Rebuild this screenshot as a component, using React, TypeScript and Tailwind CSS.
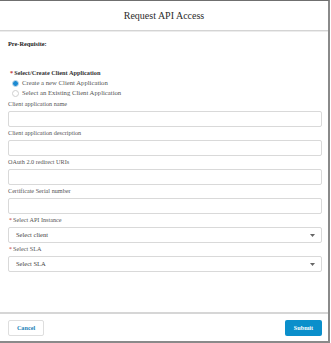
import React from "react";

const serif = { fontFamily: '"Liberation Serif", "Times New Roman", serif' };

function Field({ label }: { label: string }) {
  return (
    <div className="mt-[1px]">
      <div className="h-[10px] leading-[10px] text-[6.2px] text-[#555]">{label}</div>
      <div className="mt-[2px] h-[16px] rounded-[2px] border border-[#d9d9d9] bg-white" />
    </div>
  );
}

function SelectField({ label, placeholder }: { label: string; placeholder: string }) {
  return (
    <div className="mt-[1px]">
      <div className="h-[10px] leading-[10px] text-[6.2px] text-[#555] pl-[1px]">
        <span className="text-[#c23934] mr-[1px]">*</span>
        {label}
      </div>
      <div className="mt-[2px] h-[16px] rounded-[2px] border border-[#d9d9d9] bg-white flex items-center justify-between pl-[7px] pr-[6px]">
        <span className="text-[6.5px] text-[#444]">{placeholder}</span>
        <svg width="5" height="3" viewBox="0 0 5 3">
          <path d="M0 0 L5 0 L2.5 3 Z" fill="#666" />
        </svg>
      </div>
    </div>
  );
}

function Radio({ checked, label }: { checked?: boolean; label: string }) {
  return (
    <div className="h-[10px] flex items-center pl-[4px]">
      {checked ? (
        <span className="w-[7px] h-[7px] rounded-full border border-[#c7dbe9] bg-[#1b8ad2] shrink-0" />
      ) : (
        <span className="w-[7px] h-[7px] rounded-full border border-[#cfcfcf] bg-white shrink-0" />
      )}
      <span className="ml-[3px] text-[6.7px] text-[#555] leading-[10px]">{label}</span>
    </div>
  );
}

export default function App() {
  return (
    <div className="w-[331px] h-[343px] bg-white" style={serif}>
      <div className="w-[330px] h-[343px] flex flex-col border-t border-r-2 border-b-2 border-[#8a8a8a] border-t-[#6f6f6f]">
        {/* Header */}
        <div className="h-[30px] shrink-0 flex items-center justify-center border-b border-[#d4d4d4] shadow-[0_1px_0_#ececec]">
          <h1 className="text-[10px] text-[#2b2b2b]">Request API Access</h1>
        </div>

        {/* Body */}
        <div className="flex-1 pl-[8px] pr-[6px] pt-[8px]">
          <p className="h-[10px] leading-[10px] text-[6.3px] font-bold text-[#222]">Pre-Requisite:</p>

          <div className="mt-[19px]">
            <div className="h-[10px] leading-[10px] text-[6.3px] font-bold text-[#333] pl-[2px]">
              <span className="text-[#c23934] mr-[1px]">*</span>
              Select/Create Client Application
            </div>
            <Radio checked label="Create a new Client Application" />
            <Radio label="Select an Existing Client Application" />
          </div>

          <Field label="Client application name" />
          <Field label="Client application description" />
          <Field label="OAuth 2.0 redirect URIs" />
          <Field label="Certificate Serial number" />
          <SelectField label="Select API Instance" placeholder="Select client" />
          <SelectField label="Select SLA" placeholder="Select SLA" />
        </div>

        {/* Footer */}
        <div className="h-[29px] shrink-0 border-t-2 border-[#d6d6d6] flex items-center justify-between pl-[8px] pr-[6px]">
          <button className="w-[36px] h-[16px] rounded-[2px] border border-[#dedede] bg-white text-[6.2px] font-bold text-[#1a7fb8]">
            Cancel
          </button>
          <button className="w-[37px] h-[16px] rounded-[2px] bg-[#0b8fcb] text-[6.2px] font-bold text-white">
            Submit
          </button>
        </div>
      </div>
    </div>
  );
}
